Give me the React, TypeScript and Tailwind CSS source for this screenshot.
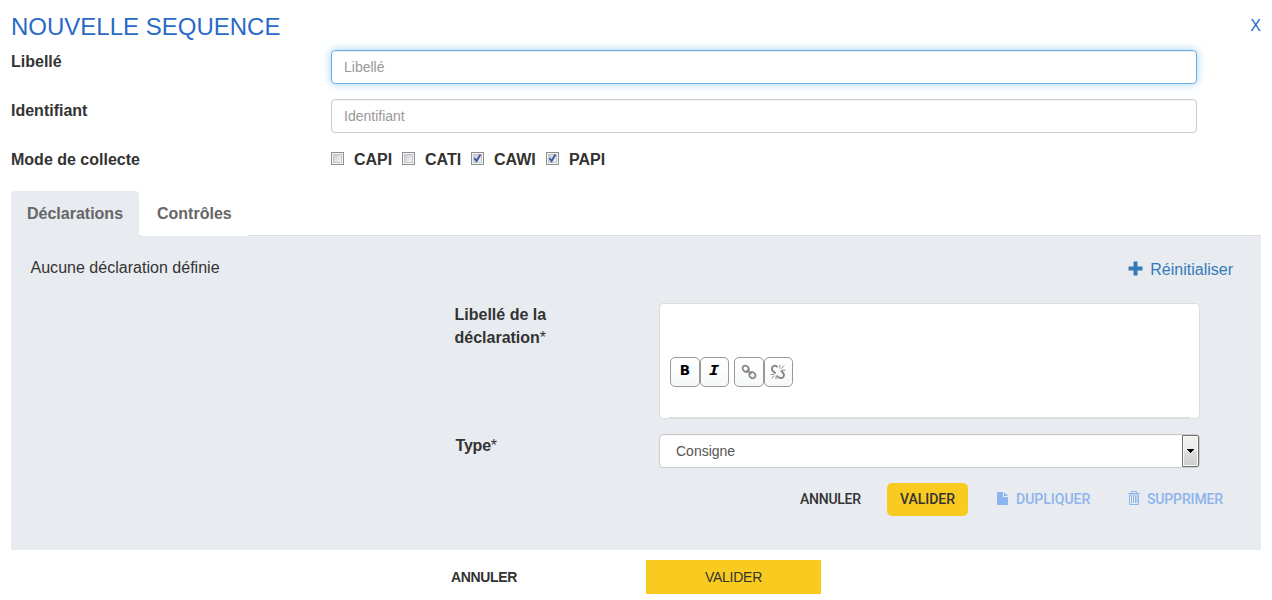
import { useState } from "react";
import type { ReactNode } from "react";

const MODES = [
  { name: "CAPI", on: false, box: "w-[71px]" },
  { name: "CATI", on: false, box: "w-[69px]" },
  { name: "CAWI", on: true, box: "w-[75px]" },
  { name: "PAPI", on: true, box: "w-[71px]" },
];

function Check({ checked }: { checked: boolean }) {
  return (
    <svg width="13" height="13" viewBox="0 0 13 13" className="mt-px shrink-0">
      <defs>
        <linearGradient id="box" x1="0" y1="0" x2="1" y2="1">
          <stop offset="0" stopColor="#c4c9d2" />
          <stop offset="1" stopColor="#f7f7f7" />
        </linearGradient>
      </defs>
      <rect x="0.5" y="0.5" width="12" height="12" fill="#f4f4f4" stroke="#8e8f8f" />
      <rect x="2.5" y="2.5" width="8" height="8" fill="url(#box)" stroke="#c3c7cd" />
      {checked && <path d="M3.4 6.2 L5.6 9 L9.4 2.6" fill="none" stroke="#4059a4" strokeWidth="1.9" />}
    </svg>
  );
}

function Row({ label, height, children }: { label: string; height: string; children: ReactNode }) {
  return (
    <div className={`flex ${height}`}>
      <div className="w-[320px] shrink-0 text-base leading-[23px] font-bold">{label}</div>
      {children}
    </div>
  );
}

function ToolButton({ title, children }: { title: string; children: ReactNode }) {
  return (
    <button
      aria-label={title}
      className="flex h-[30px] items-center justify-center rounded-[5px] border border-[#999] bg-linear-to-b from-white to-[#f6f8f8]"
    >
      {children}
    </button>
  );
}

export default function App() {
  const [modes, setModes] = useState(MODES);
  const toggle = (name: string) => setModes(modes.map((m) => (m.name === name ? { ...m, on: !m.on } : m)));

  return (
    <div className="flex h-[600px] w-[1272px] flex-col overflow-hidden bg-white pr-[11px] pl-[11px] font-['Liberation_Sans',Arial,sans-serif] text-[#333]">
      <header className="flex h-[50px] items-start justify-between text-[#2a6ac7]">
        <h1 className="pt-[13px] text-2xl leading-[28px]">NOUVELLE SEQUENCE</h1>
        <button className="pt-[14px] text-base leading-[23px]">X</button>
      </header>

      <Row label="Libellé" height="h-[49px]">
        <input
          placeholder="Libellé"
          className="h-[34px] w-[866px] rounded-[4px] border border-[#66afe9] px-3 text-sm shadow-[inset_0_1px_1px_rgba(0,0,0,0.075),0_0_8px_rgba(102,175,233,0.6)] outline-none placeholder:text-[#999]"
        />
      </Row>
      <Row label="Identifiant" height="h-[49px]">
        <input
          placeholder="Identifiant"
          className="h-[34px] w-[866px] rounded-[4px] border border-[#ccc] px-3 text-sm shadow-[inset_0_1px_1px_rgba(0,0,0,0.04)] outline-none placeholder:text-[#999]"
        />
      </Row>
      <Row label="Mode de collecte" height="h-[43px]">
        <div className="flex pt-[3px]">
          {modes.map((m) => (
            <button key={m.name} onClick={() => toggle(m.name)} className={`flex h-[17px] items-start ${m.box}`}>
              <Check checked={m.on} />
              <span className="-mt-[3px] ml-[10px] text-base leading-[23px] font-bold">{m.name}</span>
            </button>
          ))}
        </div>
      </Row>

      <nav className="flex h-[45px] text-base leading-[45px] font-bold text-[#666]">
        <div className="w-[128px] rounded-t-[4px] bg-[#e8ebf0] pl-4">Déclarations</div>
        <div className="w-[2px] border-b border-[#ddd]" />
        <div className="w-[107px] pl-4">Contrôles</div>
        <div className="flex-1 border-b border-[#ddd]" />
      </nav>

      <section className="flex h-[314px] flex-col bg-[#e8ebf0]">
        <div className="flex h-[67px] justify-between pr-7 pl-[19.5px] text-base leading-[23px]">
          <p className="pt-5 tracking-[0.02px]">Aucune déclaration définie</p>
          <button className="mt-[22px] flex h-[23px] items-center self-start text-[#337ab7]">
            <svg width="15" height="15" viewBox="0 0 15 15" className="mr-[7px] -mt-[2px]">
              <path d="M5.5 .5h4v5h5v4h-5v5h-4v-5h-5v-4h5z" fill="currentColor" />
            </svg>
            Réinitialiser
          </button>
        </div>

        <div className="flex h-[131px] pl-[443.5px]">
          <div className="w-[204.5px] text-base leading-[23px] font-bold">
            Libellé de la
            <br />
            déclaration<span className="font-normal">*</span>
          </div>
          <div className="flex h-[116px] w-[541px] flex-col rounded-[4px] border border-[#ddd] bg-white">
            <div className="flex flex-1 pt-[53px] pl-[10px]">
              <div className="grid h-[30px] grid-cols-[30px_29px]">
                <ToolButton title="Gras">
                  <span className="-mt-[2px] font-['DejaVu_Sans',sans-serif] text-[13.5px] leading-none font-bold text-black">
                    B
                  </span>
                </ToolButton>
                <ToolButton title="Italique">
                  <span className="-mt-[2px] -ml-px scale-x-125 font-['DejaVu_Sans_Mono',monospace] text-[13.5px] leading-none font-bold text-black italic">
                    I
                  </span>
                </ToolButton>
              </div>
              <div className="ml-[5px] grid h-[30px] grid-cols-[30px_29px]">
                <ToolButton title="Lien">
                  <svg width="16" height="16" viewBox="0 0 16 16" className="-mt-px" fill="none" stroke="#888" strokeWidth="1.8">
                    <ellipse cx="4.7" cy="4.7" rx="3.3" ry="2.8" transform="rotate(45 4.7 4.7)" />
                    <ellipse cx="11.3" cy="11.1" rx="3.3" ry="2.8" transform="rotate(45 11.3 11.1)" />
                    <path d="M5.8 6l4.6 4" />
                  </svg>
                </ToolButton>
                <ToolButton title="Retirer le lien">
                  <svg width="16" height="16" viewBox="0 0 16 16" className="-mt-px -ml-[2px] shrink-0" fill="none" stroke="#888" strokeWidth="1.9">
                    <path d="M7.6 3C5.6 1 3.4 1.7 2.3 3.3C1 5.4 2.4 7.2 5.6 9.4" />
                    <path d="M6.6 11.5C8.8 14.6 11.8 14.7 13.4 12.8C15 10.6 13.6 8.7 10.8 6.4" />
                    <path d="M9.8 4.5V1M11.2 4.7l3-3M12 6.2h3.4M4 10.5H.6M4.5 11.5l-3 3M6 12.4v3" strokeWidth=".9" />
                  </svg>
                </ToolButton>
              </div>
            </div>
            <div className="mr-[9px] ml-[9px] h-px bg-[#ddd]" />
          </div>
        </div>

        <div className="flex h-[49px] pl-[444.5px]">
          <div className="w-[203.5px] text-base leading-[23px] font-bold">
            <span className="tracking-[-0.2px]">Type</span>
            <span className="font-normal">*</span>
          </div>
          <button className="flex h-[34px] w-[541px] items-center justify-between rounded-[4px] border border-[#ccc] bg-white pl-4 text-sm text-[#555] shadow-[inset_0_1px_1px_rgba(0,0,0,0.04)]">
            Consigne
            <span className="flex h-[32px] w-[17px] items-center justify-center rounded-r-[2px] border border-[#707070] bg-[linear-gradient(#f2f2f2,#ebebeb_50%,#dddddd_50%,#cfcfcf)] shadow-[inset_0_0_0_1px_#fafafa]">
              <svg width="7" height="4" viewBox="0 0 7 4" className="shrink-0" shapeRendering="crispEdges">
                <path d="M0 0h7v1H0zM1 1h5v1H1zM2 2h3v1H2zM3 3h1v1H3z" fill="#000" />
              </svg>
            </span>
          </button>
        </div>

        <div className="flex h-[33px] items-center font-['Roboto',sans-serif] text-sm leading-5 font-medium">
          <button className="ml-[789px] w-[87px] pb-px text-left tracking-[-0.25px]">ANNULER</button>
          <button className="h-[33px] w-[81px] rounded-[5px] bg-[#f9cb20] pb-px">VALIDER</button>
          <button className="ml-[29px] flex w-[131px] items-center pb-px text-[#8db4ec]">
            <svg width="11" height="13" viewBox="0 0 11 13" className="mr-2 -mt-[2px]">
              <path d="M0 0h6v5h5v8H0z M7 0l4 4H7z" fill="currentColor" />
            </svg>
            DUPLIQUER
          </button>
          <button className="flex items-center pb-px tracking-[-0.15px] text-[#8db4ec]">
            <svg width="12" height="14" viewBox="0 0 12 14" className="mr-[7px] -mt-[2px]" fill="none" stroke="currentColor">
              <path d="M0 2.5h12M3.5 2V.5h5V2M1.5 4v9.5h9V4zM3.5 5v7M5.5 5v7M7.5 5v7M9 5v7" />
            </svg>
            SUPPRIMER
          </button>
        </div>
      </section>

      <footer className="flex items-center pt-[10px] text-sm">
        <button className="ml-[440px] w-[195px] text-left font-bold tracking-[-0.35px]">ANNULER</button>
        <button className="h-[34px] w-[175px] bg-[#f9cb20] tracking-[-0.25px]">VALIDER</button>
      </footer>
    </div>
  );
}
